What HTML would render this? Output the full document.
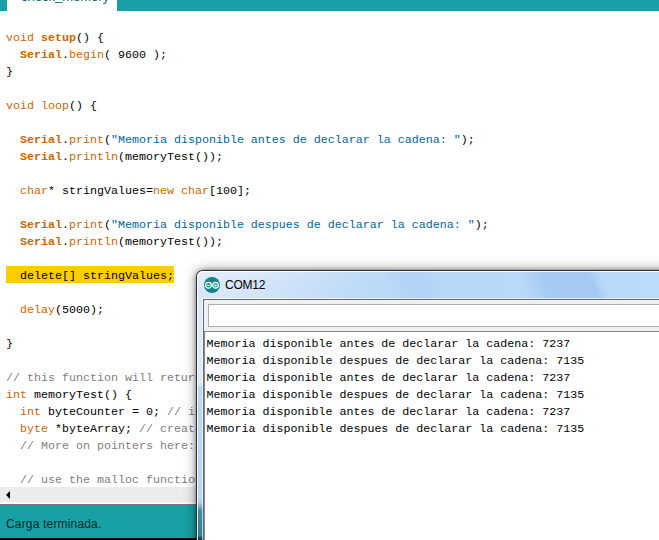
<!DOCTYPE html>
<html><head><meta charset="utf-8">
<style>
html,body{margin:0;padding:0;}
body{width:659px;height:540px;overflow:hidden;background:#fff;position:relative;font-family:"Liberation Mono",monospace;}
#topbar{position:absolute;left:0;top:0;width:659px;height:11px;background:#17a1a5;}
#tab{position:absolute;left:7px;top:0;width:110px;height:11px;background:#fff;overflow:hidden;}
#tab span{position:absolute;left:14px;top:-11px;font-family:"Liberation Sans",sans-serif;font-size:13px;color:#00686c;white-space:nowrap;}
#code{position:absolute;left:6px;top:30px;margin:0;font-family:"Liberation Mono",monospace;font-size:11.67px;line-height:17px;color:#000;white-space:pre;}
#code div{height:17px;}
#tab span i{font-style:normal;position:relative;top:-1px;}
.k{color:#cc6600;}
.kb{color:#cc6600;font-weight:bold;}
.s{color:#006699;}
.c{color:#7e7e7e;}
#hlbar{position:absolute;left:6px;top:266px;width:168px;height:17px;background:#ffcc00;}
#hscroll{position:absolute;left:0;top:487px;width:659px;height:15px;background:#ececec;border-bottom:1px solid #f6f6f6;}
#hscroll .arr{position:absolute;left:6px;top:3.5px;width:0;height:0;border-top:4px solid transparent;border-bottom:4px solid transparent;border-right:4px solid #000;}
#status{position:absolute;left:0;top:504px;width:659px;height:34px;background:#17a1a5;border-top:1px solid #7d7474;box-sizing:border-box;}
#status span{position:absolute;left:6px;top:12px;font-family:"Liberation Sans",sans-serif;font-size:12px;letter-spacing:0.17px;color:#0a2a2c;white-space:nowrap;}
#black{position:absolute;left:0;top:538px;width:659px;height:2px;background:#000;}
#win{position:absolute;left:197px;top:271px;width:480px;height:290px;border-radius:6px 0 0 0;background:linear-gradient(90deg,#dbe8f7 0px,#d4e5f8 55px,#cae0f8 105px,#bfdbf8 155px,#b9d8f8 205px,#b8d8f9 300px,#bbdbfb 480px);box-shadow:0 0 0 1px #2a3038, 0 0 14px rgba(0,0,0,0.45), 0 0 5px rgba(0,0,0,0.6);overflow:hidden;}
#stripe{position:absolute;left:326px;top:0;width:82px;height:28px;transform:skewX(20deg);background:linear-gradient(90deg,rgba(150,190,232,0),rgba(150,190,232,0.5) 25%,rgba(150,190,232,0.6) 85%,rgba(150,190,232,0) 100%);}
#stripe2{position:absolute;left:190px;top:0;width:60px;height:28px;transform:skewX(20deg);background:linear-gradient(90deg,rgba(150,190,232,0),rgba(160,198,236,0.3) 50%,rgba(150,190,232,0) 100%);}
#sheen{position:absolute;left:0;top:0;width:200px;height:28px;background:linear-gradient(180deg,rgba(255,255,255,0.3),rgba(255,255,255,0) 70%);-webkit-mask-image:linear-gradient(90deg,#000,transparent);mask-image:linear-gradient(90deg,#000,transparent);}
#lframe{position:absolute;left:0;top:28px;width:6px;height:262px;background:linear-gradient(180deg,#dde9f8 0px,#dfeaf8 85px,#bcd7f3 88px,#b9d5f2 200px,#a9cbe6 204px,#3f8ea0 212px,#2c8496 237px,#1d4050 239px,#1d4050 262px);}
#inner{position:absolute;left:0;top:0;width:480px;height:290px;border-radius:6px 0 0 0;box-shadow:inset 1px 1px 0 0 rgba(255,255,255,0.9);}
#title{position:absolute;left:28px;top:7px;font-family:"Liberation Sans",sans-serif;font-size:12px;letter-spacing:-0.25px;color:#000;}
#client{position:absolute;left:6px;top:28px;width:480px;height:270px;background:#f0f0f0;border:1px solid #5f6b7a;box-shadow:0 0 0 1px rgba(255,255,255,0.65);}
#input{position:absolute;left:4px;top:4px;width:480px;height:21px;background:#fff;border:1px solid #abadb3;}
#out{position:absolute;left:0px;top:31px;width:480px;height:240px;background:#fff;border-top:1px solid #828790;border-left:1px solid #828790;}
#out pre{position:absolute;left:1.5px;top:4px;margin:0;font-family:"Liberation Mono",monospace;font-size:11.67px;line-height:17px;color:#000;}
</style></head><body>
<div id="topbar"></div>
<div id="tab"><span>check<i>_</i>memory</span></div>
<div id="hlbar"></div>
<div id="code"><div><span class="k">void</span> <span class="kb">setup</span>() {</div><div>  <span class="kb">Serial</span>.<span class="k">begin</span>( 9600 );</div><div>}</div><div> </div><div><span class="k">void</span> <span class="k">loop</span>() {</div><div> </div><div>  <span class="kb">Serial</span>.<span class="k">print</span>(<span class="s">"Memoria disponible antes de declarar la cadena: "</span>);</div><div>  <span class="kb">Serial</span>.<span class="k">println</span>(memoryTest());</div><div> </div><div>  <span class="k">char</span>* stringValues=<span class="k">new</span> <span class="k">char</span>[100];</div><div> </div><div>  <span class="kb">Serial</span>.<span class="k">print</span>(<span class="s">"Memoria disponible despues de declarar la cadena: "</span>);</div><div>  <span class="kb">Serial</span>.<span class="k">println</span>(memoryTest());</div><div> </div><div><span class="hl">  delete[] stringValues;</span></div><div> </div><div>  <span class="k">delay</span>(5000);</div><div> </div><div>}</div><div> </div><div><span class="c">// this function will return the number of bytes currently free in RAM</span></div><div><span class="k">int</span> memoryTest() {</div><div>  <span class="k">int</span> byteCounter = 0; <span class="c">// initialize a counter</span></div><div>  <span class="k">byte</span> *byteArray; <span class="c">// create a pointer to a byte array</span></div><div>  <span class="c">// More on pointers here:</span></div><div> </div><div>  <span class="c">// use the malloc function to repeatedly attempt allocating a certain number of bytes to memory</span></div></div>
<div id="hscroll"><div class="arr"></div></div>
<div id="status"><span>Carga terminada.</span></div>
<div id="black"></div>
<div id="win">
  <div id="stripe2"></div><div id="stripe"></div><div id="sheen"></div><div id="lframe"></div><div id="inner"></div>
  <svg id="icon" width="16" height="16" viewBox="0 0 16 16" style="position:absolute;left:7px;top:6px"><circle cx="8" cy="8" r="8" fill="#0f858a"/><circle cx="4.45" cy="8.3" r="2.85" fill="none" stroke="#fff" stroke-width="1.25"/><circle cx="11.55" cy="8.3" r="2.85" fill="none" stroke="#fff" stroke-width="1.25"/><path d="M3.2 8.4h2.5M10.3 8.4h2.5M11.55 7.15v2.5" stroke="#fff" stroke-width="1.3" fill="none"/></svg>
  <div id="title">COM12</div>
  <div id="client"><div id="input"></div><div id="out"><pre>Memoria disponible antes de declarar la cadena: 7237
Memoria disponible despues de declarar la cadena: 7135
Memoria disponible antes de declarar la cadena: 7237
Memoria disponible despues de declarar la cadena: 7135
Memoria disponible antes de declarar la cadena: 7237
Memoria disponible despues de declarar la cadena: 7135</pre></div></div>
</div>
</body></html>
